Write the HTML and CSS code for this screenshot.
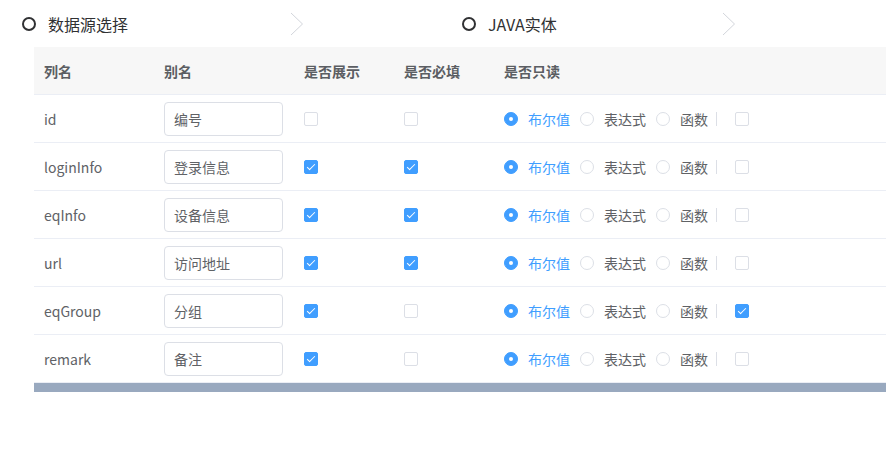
FILE: index.html
```html
<!DOCTYPE html>
<html lang="zh-CN">
<head>
<meta charset="utf-8">
<title>字段配置</title>
<link rel="stylesheet" href="styles.css">
</head>
<body>
<div class="steps">
  <div class="step step-first">
    <span class="step-icon"></span>
    <span class="step-title">数据源选择</span>
    <svg class="step-arrow" width="14" height="24" viewBox="0 0 14 24"><polyline points="1,1 12.5,12 1,23" fill="none" stroke="#d3d6dc" stroke-width="1"/></svg>
  </div>
  <div class="step step-second">
    <span class="step-icon"></span>
    <span class="step-title">JAVA实体</span>
    <svg class="step-arrow" width="14" height="24" viewBox="0 0 14 24"><polyline points="1,1 12.5,12 1,23" fill="none" stroke="#d3d6dc" stroke-width="1"/></svg>
  </div>
</div>

<div class="table-wrap">
  <div class="row head">
    <div class="cell">列名</div><div class="cell">别名</div><div class="cell">是否展示</div><div class="cell">是否必填</div><div class="cell">是否只读</div>
  </div>
  <div class="row">
    <div class="cell">id</div>
    <div class="cell"><input class="inp" value="编号"></div>
    <div class="cell"><span class="cb"></span></div>
    <div class="cell"><span class="cb"></span></div>
    <div class="cell ro"><span class="radio on"></span><span class="rl on">布尔值</span><span class="radio"></span><span class="rl">表达式</span><span class="radio"></span><span class="rl">函数</span><span class="sep"></span><span class="cb"></span></div>
  </div>
  <div class="row">
    <div class="cell">loginInfo</div>
    <div class="cell"><input class="inp" value="登录信息"></div>
    <div class="cell"><span class="cb on"></span></div>
    <div class="cell"><span class="cb on"></span></div>
    <div class="cell ro"><span class="radio on"></span><span class="rl on">布尔值</span><span class="radio"></span><span class="rl">表达式</span><span class="radio"></span><span class="rl">函数</span><span class="sep"></span><span class="cb"></span></div>
  </div>
  <div class="row">
    <div class="cell">eqInfo</div>
    <div class="cell"><input class="inp" value="设备信息"></div>
    <div class="cell"><span class="cb on"></span></div>
    <div class="cell"><span class="cb on"></span></div>
    <div class="cell ro"><span class="radio on"></span><span class="rl on">布尔值</span><span class="radio"></span><span class="rl">表达式</span><span class="radio"></span><span class="rl">函数</span><span class="sep"></span><span class="cb"></span></div>
  </div>
  <div class="row">
    <div class="cell">url</div>
    <div class="cell"><input class="inp" value="访问地址"></div>
    <div class="cell"><span class="cb on"></span></div>
    <div class="cell"><span class="cb on"></span></div>
    <div class="cell ro"><span class="radio on"></span><span class="rl on">布尔值</span><span class="radio"></span><span class="rl">表达式</span><span class="radio"></span><span class="rl">函数</span><span class="sep"></span><span class="cb"></span></div>
  </div>
  <div class="row">
    <div class="cell">eqGroup</div>
    <div class="cell"><input class="inp" value="分组"></div>
    <div class="cell"><span class="cb on"></span></div>
    <div class="cell"><span class="cb"></span></div>
    <div class="cell ro"><span class="radio on"></span><span class="rl on">布尔值</span><span class="radio"></span><span class="rl">表达式</span><span class="radio"></span><span class="rl">函数</span><span class="sep"></span><span class="cb on"></span></div>
  </div>
  <div class="row">
    <div class="cell">remark</div>
    <div class="cell"><input class="inp" value="备注"></div>
    <div class="cell"><span class="cb on"></span></div>
    <div class="cell"><span class="cb"></span></div>
    <div class="cell ro"><span class="radio on"></span><span class="rl on">布尔值</span><span class="radio"></span><span class="rl">表达式</span><span class="radio"></span><span class="rl">函数</span><span class="sep"></span><span class="cb"></span></div>
  </div>
  <div class="hscroll"></div>
</div>
</body>
</html>
```

FILE: styles.css
```css
html, body {
  margin: 0;
  padding: 0;
  background: #fff;
}
body {
  font-family: "Noto Sans CJK SC", "Noto Sans", sans-serif;
  font-size: 14px;
  color: #606266;
  width: 886px;
  overflow: hidden;
}

/* steps */
.steps {
  display: flex;
  height: 47px;
  padding-left: 22px;
}
.step {
  display: flex;
  align-items: center;
  width: 440px;
  flex: none;
}
.step-icon {
  width: 14px;
  height: 14px;
  box-sizing: border-box;
  border: 2px solid #303133;
  border-radius: 50%;
  flex: none;
}
.step-title {
  margin-left: 12px;
  font-size: 16px;
  line-height: 22px;
  color: #303133;
}
.step-arrow {
  margin-left: auto;
  flex: none;
  display: block;
}
.step-first .step-arrow { margin-right: 158px; }
.step-second .step-arrow { margin-right: 166px; }

/* table */
.table-wrap {
  margin-left: 34px;
  width: 852px;
}
.row {
  display: grid;
  grid-template-columns: 120px 140px 100px 100px 1fr;
  height: 48px;
  box-sizing: border-box;
  border-bottom: 1px solid #ebeef5;
  line-height: 20px;
}
.row.head {
  background: #f7f7f7;
  font-weight: bold;
  color: #5b5e63;
}
.cell {
  display: flex;
  align-items: center;
  padding-left: 10px;
  white-space: nowrap;
}

.inp {
  display: block;
  width: 119px;
  height: 34px;
  box-sizing: border-box;
  border: 1px solid #dcdfe6;
  border-radius: 4px;
  padding: 0 9px;
  font: inherit;
  font-size: 14px;
  color: #606266;
  background: #fff;
  outline: none;
}

.cb {
  display: block;
  position: relative;
  width: 14px;
  height: 14px;
  box-sizing: border-box;
  border: 1px solid #dcdfe6;
  border-radius: 2px;
  background: #fff;
  flex: none;
}
.cb.on {
  background: #409eff;
  border-color: #409eff;
}
.cb.on::after {
  content: "";
  position: absolute;
  left: 4px;
  top: 1px;
  width: 3px;
  height: 7px;
  border: 1px solid #fff;
  border-left: 0;
  border-top: 0;
  transform: rotate(45deg);
}

.radio {
  position: relative;
  width: 14px;
  height: 14px;
  box-sizing: border-box;
  border: 1px solid #dcdfe6;
  border-radius: 50%;
  background: #fff;
  flex: none;
}
.radio.on {
  background: #409eff;
  border-color: #409eff;
}
.radio.on::after {
  content: "";
  position: absolute;
  left: 4px;
  top: 4px;
  width: 4px;
  height: 4px;
  border-radius: 50%;
  background: #fff;
}
.rl {
  margin-left: 10px;
  margin-right: 10px;
  color: #606266;
}
.rl.on { color: #409eff; }
.sep {
  width: 1px;
  height: 14px;
  background: #dcdfe6;
  margin-left: -2px;
  margin-right: 18px;
  flex: none;
}

.hscroll {
  height: 9px;
  background: #99a9bf;
}
```
